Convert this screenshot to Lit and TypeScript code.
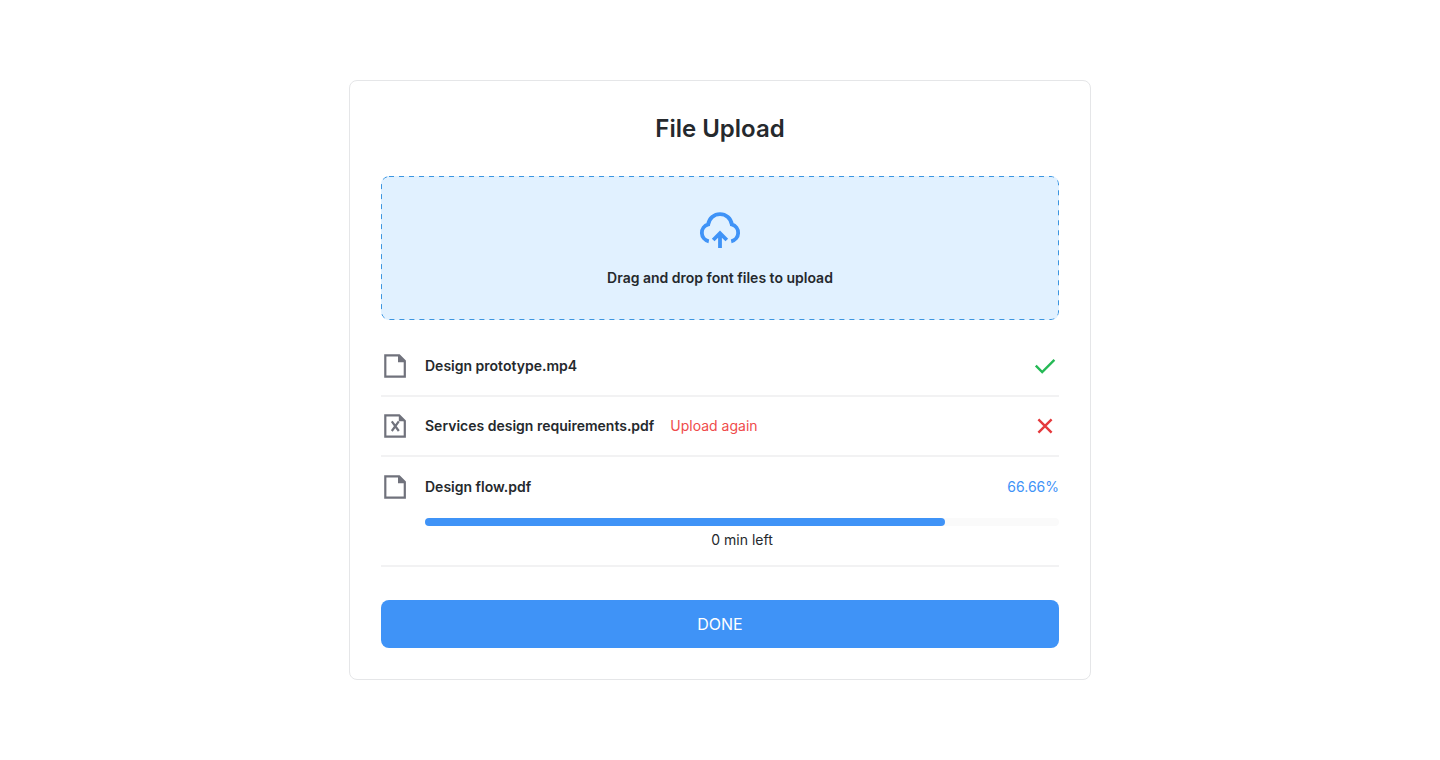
import { LitElement, html, svg, css, nothing } from "lit";
import { customElement, property } from "lit/decorators.js";

type Status = "done" | "failed" | "uploading";

interface UploadFile {
  name: string;
  status: Status;
  percent?: string;
  filled?: number;
  remaining?: string;
}

const FILES: UploadFile[] = [
  { name: "Design prototype.mp4", status: "done" },
  { name: "Services design requirements.pdf", status: "failed" },
  {
    name: "Design flow.pdf",
    status: "uploading",
    percent: "66.66%",
    filled: 82,
    remaining: "0 min left",
  },
];

const cloudIcon = html`<svg class="cloud" viewBox="0 0 44 44" aria-hidden="true">
  <path d="M10.8 33.3A8.7 8.7 0 0 1 10.2 16.4A11.9 11.9 0 0 1 33.8 16.4A8.7 8.7 0 0 1 33.2 33.3" />
  <path d="M22 40V26M15.2 32L22 25.2L28.8 32" />
</svg>`;

const fileIcon = (failed: boolean) => html`<svg class="icon file" viewBox="0 0 28 28" aria-hidden="true">
  <path d="M4.3 3.3H18.2L23.8 8.9V24.7H4.3Z" />
  ${failed
    ? svg`<path class="fold" d="M17.8 3.2V9.2H24Z" />
        <path d="M10.8 9.4L17.8 19M17.8 9.4L10.8 19" />`
    : svg`<path class="fold" d="M17 3V10.2H24.4Z" />`}
</svg>`;

@customElement("upload-row")
export class UploadRow extends LitElement {
  static styles = css`
    :host {
      display: block;
      padding: 15px 0;
      border-bottom: 2px solid #f2f2f3;
    }
    :host([status="uploading"]) {
      padding-top: 16px;
    }
    .line {
      display: flex;
      align-items: center;
      gap: 16px;
    }
    .icon {
      width: 28px;
      height: 28px;
      flex: none;
      fill: none;
    }
    .file {
      stroke: #70727c;
      stroke-width: 2.2;
    }
    .fold {
      fill: #70727c;
      stroke: none;
    }
    .name {
      font-weight: 600;
    }
    .retry {
      color: #ef4b4b;
      text-decoration: none;
    }
    .end {
      margin-left: auto;
    }
    .check {
      stroke: #25b955;
      stroke-width: 2.4;
    }
    .cross {
      stroke: #e5393c;
      stroke-width: 2.4;
    }
    .percent {
      color: #3f93f7;
    }
    .progress {
      margin: 17px 0 0 44px;
    }
    .track {
      height: 8px;
      border-radius: 4px;
      background: #fafafa;
    }
    .fill {
      height: 8px;
      border-radius: 4px;
      background: #3f93f7;
    }
    .remaining {
      margin: 4px 0 0;
      text-align: center;
    }
  `;

  @property({ attribute: false }) file!: UploadFile;

  private renderEnd() {
    switch (this.file.status) {
      case "done":
        return html`<svg class="icon check end" viewBox="0 0 28 28" role="img" aria-label="Uploaded">
          <path d="M4.8 13.6L11.2 20L23.4 7.8" />
        </svg>`;
      case "failed":
        return html`<svg class="icon cross end" viewBox="0 0 28 28" role="img" aria-label="Failed">
          <path d="M7.4 7.4L20.6 20.6M20.6 7.4L7.4 20.6" />
        </svg>`;
      default:
        return html`<span class="percent end">${this.file.percent}</span>`;
    }
  }

  render() {
    const { name, status, filled, remaining } = this.file;
    return html`
      <div class="line">
        ${fileIcon(status === "failed")}
        <span class="name">${name}</span>
        ${status === "failed" ? html`<a class="retry" href="#retry">Upload again</a>` : nothing}
        ${this.renderEnd()}
      </div>
      ${status === "uploading"
        ? html`<div class="progress">
            <div class="track" role="progressbar" aria-label=${name} aria-valuenow=${filled ?? 0}>
              <div class="fill" style="width: ${filled}%"></div>
            </div>
            <p class="remaining">${remaining}</p>
          </div>`
        : nothing}
    `;
  }
}

@customElement("app-root")
export class AppRoot extends LitElement {
  static styles = css`
    :host {
      display: flex;
      box-sizing: border-box;
      min-height: 100vh;
      align-items: center;
      justify-content: center;
      padding: 16px;
      background: #ffffff;
      color: #25292d;
      font: 400 14px/20px Inter, sans-serif;
    }
    .card {
      box-sizing: border-box;
      width: 100%;
      max-width: 742px;
      padding: 31px;
      border: 1px solid #e5e6e8;
      border-radius: 8px;
    }
    .title {
      margin: 0 0 30px;
      font-size: 24px;
      line-height: 34px;
      font-weight: 600;
      text-align: center;
    }
    .drop {
      position: relative;
      display: flex;
      flex-direction: column;
      align-items: center;
      gap: 16px;
      padding: 32px;
      border-radius: 8px;
      background: #e1f1ff;
      font-weight: 600;
      cursor: pointer;
    }
    .outline {
      position: absolute;
      inset: 0;
      width: 100%;
      height: 100%;
      overflow: hidden;
      border-radius: 8px;
    }
    .dashes {
      x: 0.5px;
      y: 0.5px;
      width: calc(100% - 1px);
      height: calc(100% - 1px);
      rx: 7.5px;
      fill: none;
      stroke: #3b95e0;
      stroke-dasharray: 5 5;
    }
    .picker {
      position: absolute;
      inset: 0;
      opacity: 0;
    }
    .cloud {
      width: 44px;
      height: 44px;
      fill: none;
      stroke: #3f93f7;
      stroke-width: 3.8;
    }
    .files {
      margin: 17px 0 33px;
    }
    .submit {
      display: block;
      width: 100%;
      padding: 12px;
      border: 0;
      border-radius: 8px;
      background: #3f93f7;
      color: #ffffff;
      font: 400 16px/24px Inter, sans-serif;
      cursor: pointer;
    }
  `;

  render() {
    return html`
      <main class="card">
        <h1 class="title">File Upload</h1>
        <label class="drop">
          <svg class="outline" aria-hidden="true"><rect class="dashes" /></svg>
          ${cloudIcon}
          <span>Drag and drop font files to upload</span>
          <input class="picker" type="file" multiple />
        </label>
        <div class="files">
          ${FILES.map((file) => html`<upload-row status=${file.status} .file=${file}></upload-row>`)}
        </div>
        <button class="submit" type="button">DONE</button>
      </main>
    `;
  }
}
